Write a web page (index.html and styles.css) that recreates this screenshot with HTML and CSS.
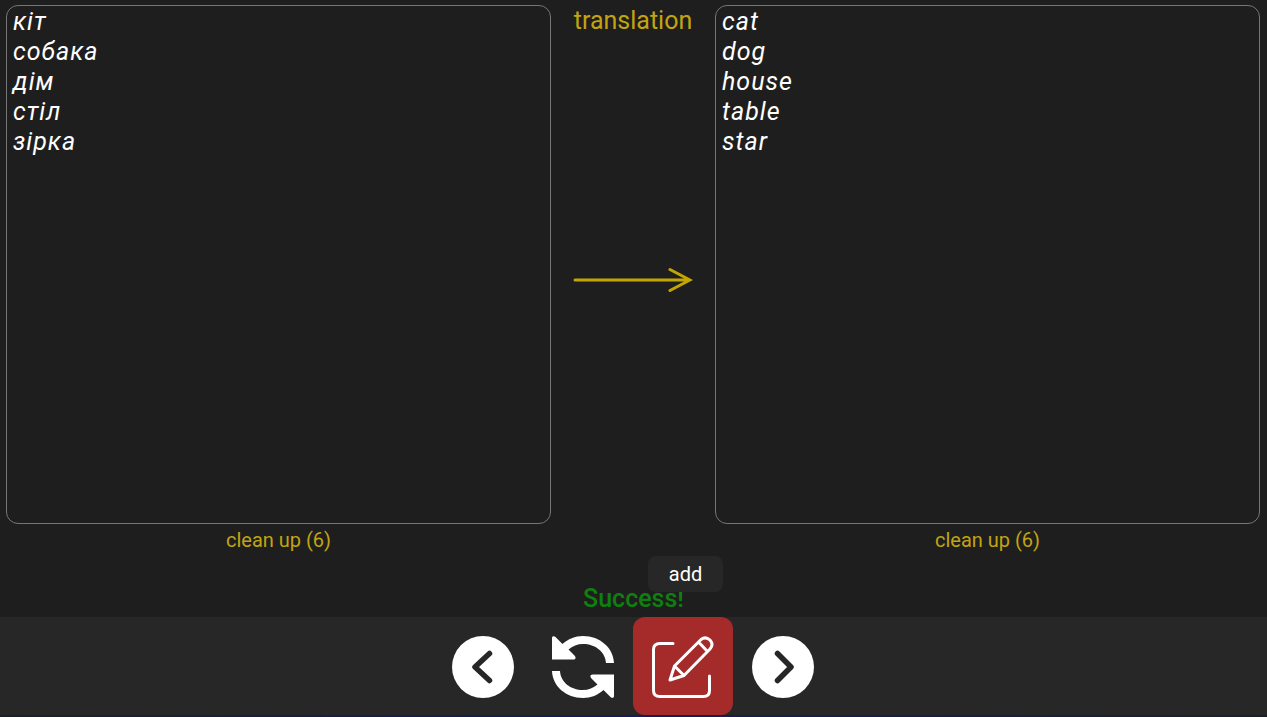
FILE: index.html
```html
<!DOCTYPE html>
<html lang="en">
<head>
<meta charset="utf-8">
<meta name="viewport" content="width=device-width, initial-scale=1">
<title>Translation</title>
<link rel="stylesheet" href="styles.css">
</head>
<body>
<main class="editor">
  <section class="column">
    <textarea class="words" aria-label="Words" spellcheck="false">кіт
собака
дім
стіл
зірка</textarea>
    <button class="clean" type="button">clean up (6)</button>
  </section>
  <section class="middle">
    <button class="mode" type="button">translation</button>
    <svg class="arrow" viewBox="0 0 120 26" fill="none" stroke="currentColor" stroke-width="3" stroke-linecap="round" aria-hidden="true">
      <path d="M2 13H116M97 2.5L117 13L97 23.5"/>
    </svg>
  </section>
  <section class="column">
    <textarea class="words" aria-label="Translations" spellcheck="false">cat
dog
house
table
star</textarea>
    <button class="clean" type="button">clean up (6)</button>
  </section>
</main>
<p class="status" role="status">Success!</p>
<nav class="toolbar">
  <button class="tool" type="button" aria-label="previous">
    <svg class="icon" viewBox="0 0 62 62" aria-hidden="true">
      <circle cx="31" cy="31" r="31" fill="#fff"/>
      <path d="M37.500 17.500L23 31L37.500 44.500" fill="none" stroke="#272727" stroke-width="5.500" stroke-linecap="round" stroke-linejoin="round"/>
    </svg>
  </button>
  <button class="tool" type="button" aria-label="swap">
    <svg class="icon" viewBox="0 0 62 62" aria-hidden="true">
      <g id="half" fill="#fff">
        <path d="M0 2C0 0 2 -.5 3.500 1L10.500 8C16 3 23 0 31 0C48 0 61.500 12 62 27H54C53.500 16 43.500 8 31 8C25.500 8 20.500 10 16.500 13.500L22.500 19.500C24.500 21.500 23.500 23.500 21.500 23.500H0Z"/>
      </g>
      <use href="#half" transform="rotate(180 31 31)"/>
    </svg>
  </button>
  <button class="tool tool-active" type="button" aria-describedby="add-tip" aria-label="add">
    <svg class="icon" viewBox="0 0 62 62" fill="none" stroke="#fff" stroke-width="3" stroke-linecap="round" stroke-linejoin="round" aria-hidden="true">
      <path d="M21 7.500H8Q1.500 7.500 1.500 13.500V54.500Q1.500 60.500 8 60.500H51.500Q57.500 60.500 57.500 54.500V40"/>
      <path d="M18 44L22.500 30L49 3.500Q53.500 0 58 4Q62 8.500 58 13L32 39.500ZM22.500 30L32 39.500M46.500 6L55.500 15.500"/>
    </svg>
    <span class="tip" id="add-tip" role="tooltip">add</span>
  </button>
  <button class="tool" type="button" aria-label="next">
    <svg class="icon" viewBox="0 0 62 62" aria-hidden="true">
      <circle cx="31" cy="31" r="31" fill="#fff"/>
      <path d="M25.500 17.500L39 31L25.500 44.500" fill="none" stroke="#272727" stroke-width="5.500" stroke-linecap="round" stroke-linejoin="round"/>
    </svg>
  </button>
</nav>
</body>
</html>
```
FILE: styles.css
```css
* {
  box-sizing: border-box;
}

body {
  display: flex;
  flex-direction: column;
  min-height: 100vh;
  margin: 0;
  background: #1e1e1e;
  color: #fff;
  font-family: Roboto, sans-serif;
}

button {
  padding: 0;
  border: 0;
  background: none;
  color: inherit;
  font: inherit;
  cursor: pointer;
}

.editor {
  flex: 1;
  display: grid;
  grid-template-columns: 1fr 164px 1fr;
  padding: 5px 7px 0 6px;
}

.column {
  display: flex;
  flex-direction: column;
  align-items: center;
}

.words {
  flex: 1;
  width: 100%;
  padding: 1px 6px;
  border: 1px solid #767676;
  border-radius: 12px;
  outline: 0;
  background: transparent;
  color: #fff;
  font: italic 400 25px/30px Roboto, sans-serif;
  letter-spacing: 1px;
  resize: none;
}

.clean {
  color: #c2a412;
  font-size: 20px;
  line-height: 32px;
}

.middle {
  display: flex;
  flex-direction: column;
  align-items: center;
}

.mode {
  color: #c2a412;
  font-size: 25px;
  line-height: 32px;
}

.arrow {
  width: 120px;
  margin: auto;
  padding-bottom: 34px;
  box-sizing: content-box;
  color: #c4a600;
}

.status {
  margin: 28px 0 3px;
  color: #0f800f;
  font-size: 25px;
  font-weight: 500;
  line-height: 30px;
  text-align: center;
}

.toolbar {
  display: flex;
  justify-content: center;
  padding: 0 1px 2px 0;
  background: linear-gradient(90deg, #1b1f2b, #141c5a 50%, #1b1f2b) bottom / 100% 2px no-repeat #272727;
}

.tool {
  position: relative;
  width: 100px;
  height: 98px;
  padding-top: 2px;
  border-radius: 12px;
}

.tool-active {
  background: #a52a2a;
}

.icon {
  display: block;
  width: 62px;
  height: 62px;
  margin: 0 auto;
}

.tip {
  position: absolute;
  left: 15px;
  bottom: 123px;
  width: 75px;
  border-radius: 8px;
  background: #272727;
  font-size: 20px;
  line-height: 36px;
}
```
